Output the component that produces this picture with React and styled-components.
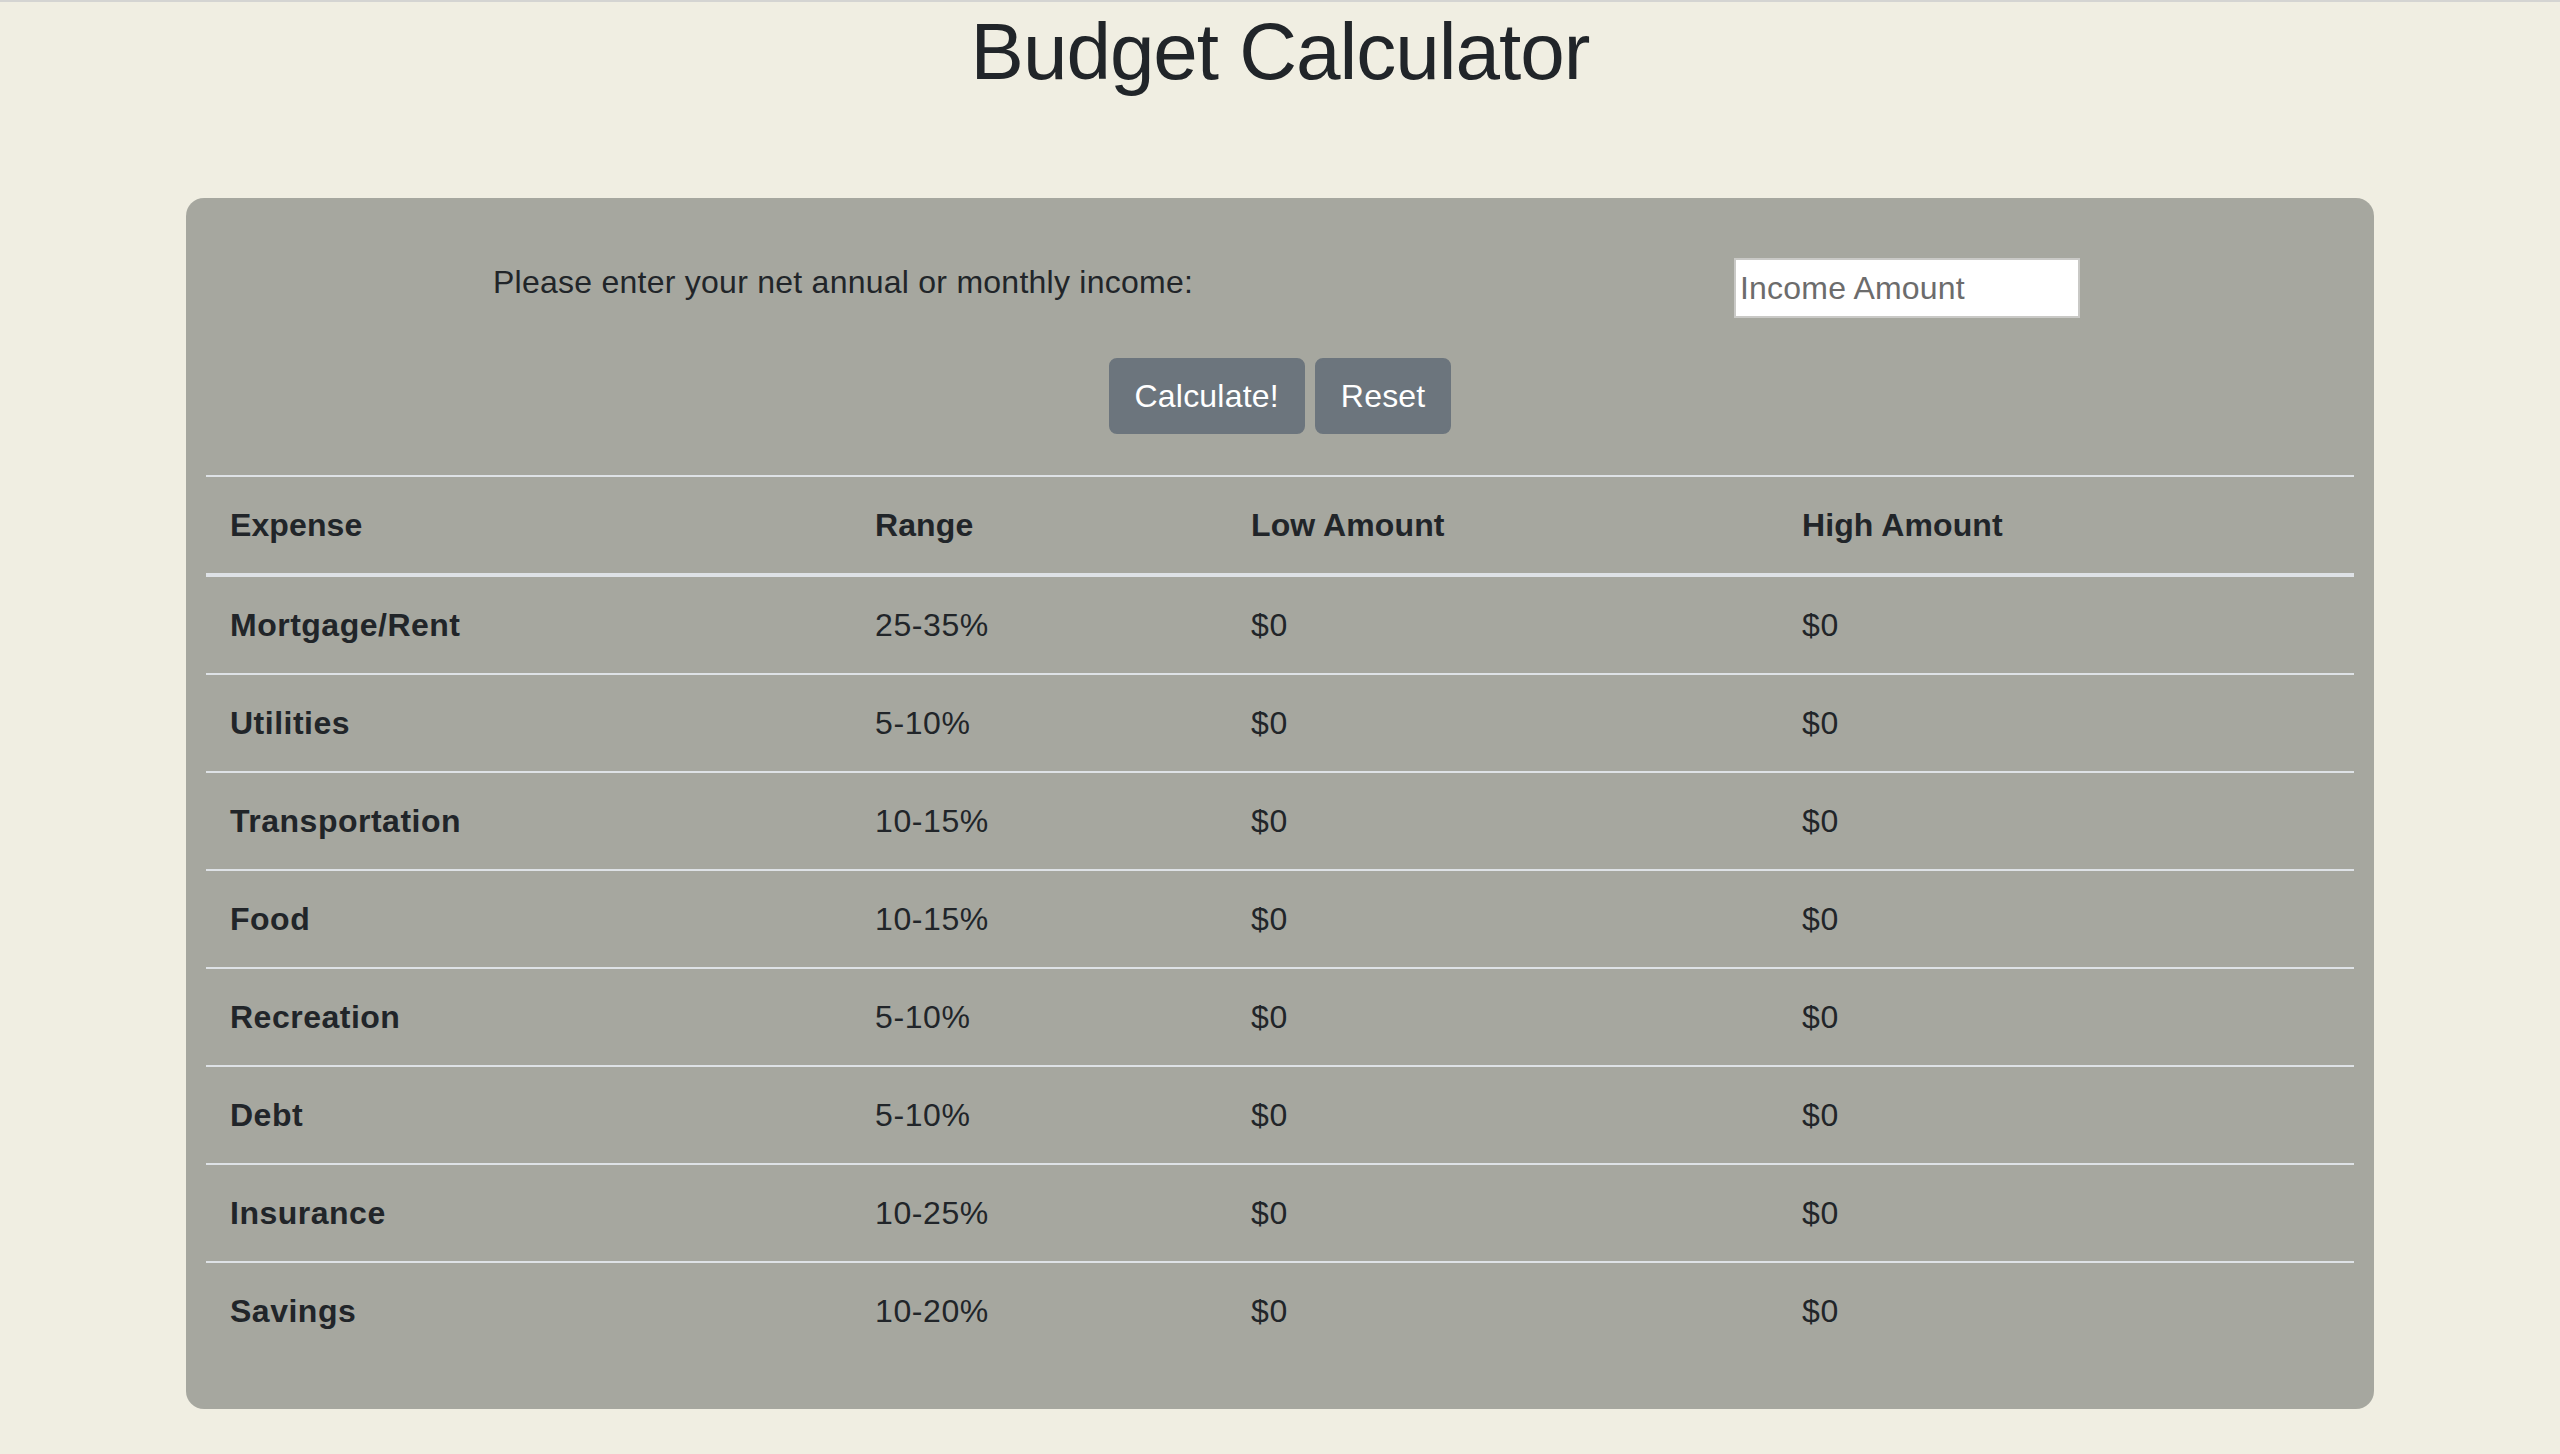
import React from "react";
import styled, { createGlobalStyle } from "styled-components";

const GlobalStyle = createGlobalStyle`
  html, body {
    margin: 0;
    padding: 0;
    background: #f0eee2;
  }
  body {
    font-family: "Liberation Sans", Arial, sans-serif;
    color: #212529;
  }
  * { box-sizing: border-box; }
`;

const Page = styled.div`
  min-height: 1454px;
  border-top: 2px solid #d4d4d2;
  background: #f0eee2;
  padding-bottom: 40px;
`;

const Title = styled.h1`
  margin: 2px 0 0;
  text-align: center;
  font-size: 80px;
  font-weight: 500;
  line-height: 96px;
  letter-spacing: -1px;
  color: #212529;
`;

const Card = styled.section`
  width: 2188px;
  margin: 98px auto 0;
  background: #a6a79f;
  border-radius: 18px;
  padding: 60px 20px 50px;
`;

const FormRow = styled.div`
  display: grid;
  grid-template-columns: 1241px 346px;
  padding-left: 287px;
  align-items: start;
`;

const Label = styled.label`
  font-size: 32px;
  line-height: 48px;
  letter-spacing: 0.25px;
  color: #212529;
`;

const Input = styled.input`
  width: 346px;
  height: 60px;
  border: 2px solid #c9c9c6;
  background: #fff;
  padding: 2px 4px;
  font-family: "Liberation Sans", Arial, sans-serif;
  font-size: 32px;
  letter-spacing: 0.2px;
  color: #212529;
  outline: none;
  &::placeholder {
    color: #6c6c6c;
    opacity: 1;
  }
`;

const ButtonRow = styled.div`
  display: flex;
  justify-content: center;
  gap: 10px;
  margin-top: 40px;
`;

const Button = styled.button`
  background: #6c757d;
  border: 2px solid #6c757d;
  border-radius: 8px;
  color: #fff;
  font-family: "Liberation Sans", Arial, sans-serif;
  font-size: 32px;
  line-height: 48px;
  padding: 12px 24px;
  letter-spacing: 0.2px;
  cursor: pointer;
`;

const Table = styled.table`
  width: 100%;
  margin-top: 41px;
  border-collapse: collapse;
  table-layout: fixed;
  font-size: 32px;
  line-height: 48px;
  color: #212529;
`;

const HeadCell = styled.th`
  text-align: left;
  font-weight: 700;
  padding: 24px;
  border-top: 2px solid #dee2e6;
  border-bottom: 4px solid #dee2e6;
  vertical-align: top;
  letter-spacing: 0.1px;
`;

const RowHead = styled.th`
  text-align: left;
  font-weight: 700;
  padding: 24px;
  border-top: 2px solid #dee2e6;
  vertical-align: top;
  letter-spacing: 0.5px;
`;

const Cell = styled.td`
  padding: 24px;
  border-top: 2px solid #dee2e6;
  vertical-align: top;
  letter-spacing: 0.6px;
`;

const rows = [
  ["Mortgage/Rent", "25-35%"],
  ["Utilities", "5-10%"],
  ["Transportation", "10-15%"],
  ["Food", "10-15%"],
  ["Recreation", "5-10%"],
  ["Debt", "5-10%"],
  ["Insurance", "10-25%"],
  ["Savings", "10-20%"],
];

export default function App() {
  return (
    <>
      <GlobalStyle />
      <Page>
        <Title>Budget Calculator</Title>
        <Card>
          <FormRow>
            <Label htmlFor="income">Please enter your net annual or monthly income:</Label>
            <Input id="income" type="text" placeholder="Income Amount" />
          </FormRow>
          <ButtonRow>
            <Button>Calculate!</Button>
            <Button>Reset</Button>
          </ButtonRow>
          <Table>
            <colgroup>
              <col style={{ width: "645px" }} />
              <col style={{ width: "376px" }} />
              <col style={{ width: "551px" }} />
              <col />
            </colgroup>
            <thead>
              <tr>
                <HeadCell>Expense</HeadCell>
                <HeadCell>Range</HeadCell>
                <HeadCell>Low Amount</HeadCell>
                <HeadCell>High Amount</HeadCell>
              </tr>
            </thead>
            <tbody>
              {rows.map(([name, range]) => (
                <tr key={name}>
                  <RowHead>{name}</RowHead>
                  <Cell>{range}</Cell>
                  <Cell>$0</Cell>
                  <Cell>$0</Cell>
                </tr>
              ))}
            </tbody>
          </Table>
        </Card>
      </Page>
    </>
  );
}
